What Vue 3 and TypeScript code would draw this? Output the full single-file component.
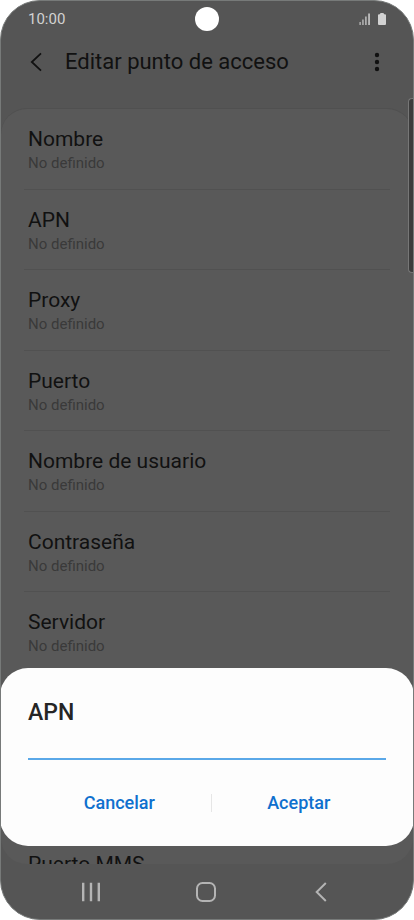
<script setup lang="ts">
import { ref } from 'vue'

interface Field {
  id: string
  label: string
  value: string
}

const fields = ref<Field[]>([
  { id: 'name', label: 'Nombre', value: '' },
  { id: 'apn', label: 'APN', value: '' },
  { id: 'proxy', label: 'Proxy', value: '' },
  { id: 'port', label: 'Puerto', value: '' },
  { id: 'user', label: 'Nombre de usuario', value: '' },
  { id: 'password', label: 'Contraseña', value: '' },
  { id: 'server', label: 'Servidor', value: '' },
  { id: 'mmsc', label: 'MMSC', value: '' },
  { id: 'mms-proxy', label: 'Proxy MMS', value: '' },
  { id: 'mms-port', label: 'Puerto MMS', value: '' },
])

const editing = ref<Field | null>(fields.value[1])
const draft = ref('')

function open(field: Field): void {
  editing.value = field
  draft.value = field.value
}

function close(): void {
  editing.value = null
}

function accept(): void {
  if (editing.value) editing.value.value = draft.value
  close()
}
</script>

<template>
  <div class="phone">
    <header class="status">
      <span class="clock">10:00</span>
      <span class="camera"></span>
      <span class="indicators">
        <svg width="12" height="12" viewBox="0 0 12 12" fill="#c4c4c4" aria-hidden="true">
          <rect x="0.5" y="9" width="1.2" height="3" />
          <rect x="3.3" y="6.5" width="1.3" height="5.5" />
          <rect x="6.2" y="3.5" width="1.4" height="8.5" />
          <rect x="9.2" y="0.5" width="1.7" height="11.5" />
        </svg>
        <svg width="8" height="12" viewBox="0 0 8 12" fill="#d2d2d2" aria-hidden="true">
          <path d="M2 1.2Q2 0 3 0H5Q6 0 6 1.2H7Q8 1.2 8 2.2V11Q8 12 7 12H1Q0 12 0 11V2.2Q0 1.2 1 1.2Z" />
        </svg>
      </span>
    </header>

    <div class="toolbar">
      <button class="icon-button" type="button" aria-label="Atrás">
        <svg width="14" height="20" viewBox="0 0 14 20" fill="none" stroke="#111" stroke-width="1.8" aria-hidden="true">
          <path d="M11 1.3L1.8 10L11 18.7" />
        </svg>
      </button>
      <h1 class="title">Editar punto de acceso</h1>
      <button class="icon-button" type="button" aria-label="Más opciones">
        <svg width="6" height="20" viewBox="0 0 6 20" fill="#111" aria-hidden="true">
          <circle cx="3" cy="3" r="2.2" />
          <circle cx="3" cy="10" r="2.2" />
          <circle cx="3" cy="17" r="2.2" />
        </svg>
      </button>
    </div>

    <main class="card">
      <ul class="fields">
        <li v-for="field in fields" :key="field.id" class="item">
          <button class="field" type="button" @click="open(field)">
            <span class="label">{{ field.label }}</span>
            <span class="value">{{ field.value || 'No definido' }}</span>
          </button>
        </li>
      </ul>
    </main>

    <nav class="navbar">
      <button class="nav-button" type="button" aria-label="Recientes">
        <svg width="20" height="20" viewBox="0 0 20 20" fill="none" stroke="#b4b4b4" stroke-width="2.4" aria-hidden="true">
          <path d="M2.2 0.8V19.2M10 0.8V19.2M17.8 0.8V19.2" />
        </svg>
      </button>
      <button class="nav-button" type="button" aria-label="Inicio">
        <svg width="20" height="20" viewBox="0 0 20 20" fill="none" stroke="#b4b4b4" stroke-width="2" aria-hidden="true">
          <rect x="1" y="1" width="18" height="18" rx="5.5" />
        </svg>
      </button>
      <button class="nav-button" type="button" aria-label="Volver">
        <svg width="12" height="20" viewBox="0 0 12 20" fill="none" stroke="#b4b4b4" stroke-width="2" aria-hidden="true">
          <path d="M10.8 1L1.7 10L10.8 19" />
        </svg>
      </button>
    </nav>

    <span class="edge-handle"></span>

    <form v-if="editing" class="dialog" role="dialog" aria-labelledby="dialog-title" @submit.prevent="accept">
      <label id="dialog-title" class="dialog-title" for="dialog-input">{{ editing.label }}</label>
      <input id="dialog-input" v-model="draft" class="dialog-input" type="text" autocomplete="off" />
      <div class="actions">
        <button class="action" type="button" @click="close">Cancelar</button>
        <span class="divider"></span>
        <button class="action" type="submit">Aceptar</button>
      </div>
    </form>
  </div>
</template>

<style>
body {
  background: #fff;
}
</style>

<style scoped>
.phone {
  position: relative;
  display: flex;
  flex-direction: column;
  box-sizing: border-box;
  height: 100vh;
  overflow: hidden;
  border: 1px solid #777a79;
  border-radius: 40px;
  background: #555;
  color: #111;
  font-family: Roboto, "Liberation Sans", sans-serif;
}

button {
  padding: 0;
  border: 0;
  background: none;
  color: inherit;
  font: inherit;
  cursor: pointer;
}

svg {
  display: block;
}

.status {
  display: grid;
  grid-template-columns: 1fr auto 1fr;
  align-items: center;
  height: 36px;
  padding: 0 27px;
}

.clock {
  color: #d2d2d2;
  font-size: 15px;
  line-height: 20px;
}

.camera {
  width: 24px;
  height: 24px;
  border-radius: 50%;
  background: #fff;
}

.indicators {
  display: flex;
  justify-content: flex-end;
  gap: 7px;
}

.toolbar {
  display: flex;
  align-items: center;
  height: 50px;
  padding: 0 24px;
}

.icon-button {
  display: flex;
  align-items: center;
  justify-content: center;
  width: 24px;
  height: 40px;
}

.title {
  flex: 1;
  margin: 0;
  padding-left: 16px;
  font-size: 22px;
  font-weight: 400;
  line-height: 30px;
}

.card {
  flex: 1;
  min-height: 0;
  margin-top: 21px;
  overflow: hidden;
  border-top: 1px solid #505050;
  border-radius: 26px;
  background: #595959;
}

.fields {
  display: grid;
  grid-template-rows: repeat(10, 1fr);
  min-height: 805px;
  margin: 0;
  padding: 0 23px;
  list-style: none;
}

.item {
  border-bottom: 1px solid #515151;
}

.field {
  display: flex;
  flex-direction: column;
  width: 100%;
  padding: 16px 4px 0;
  text-align: left;
}

.label {
  font-size: 21px;
  line-height: 28px;
}

.value {
  color: #3a3a3a;
  font-size: 15px;
  line-height: 20px;
}

.navbar {
  display: flex;
  align-items: center;
  justify-content: center;
  height: 55px;
  padding-right: 2px;
}

.nav-button {
  display: flex;
  align-items: center;
  justify-content: center;
  width: 28%;
  height: 100%;
}

.edge-handle {
  position: absolute;
  top: 97px;
  right: -1px;
  width: 5px;
  height: 173px;
  border: 1px solid #777;
  border-right: 0;
  border-radius: 4px 0 0 4px;
  background: #3c3c3c;
}

.dialog {
  position: absolute;
  right: -1px;
  bottom: 73px;
  left: -1px;
  display: flex;
  flex-direction: column;
  box-sizing: border-box;
  padding: 30px 28px 22px;
  border-radius: 28px;
  background: #fdfdfd;
}

.dialog-title {
  color: #252525;
  font-size: 23px;
  font-weight: 500;
  line-height: 30px;
}

.dialog-input {
  height: 30px;
  padding: 0;
  border: 0;
  border-bottom: 2px solid #5aa8e8;
  border-radius: 0;
  outline: 0;
  background: transparent;
  color: #252525;
  font: inherit;
  font-size: 18px;
}

.actions {
  display: flex;
  align-items: center;
  margin-top: 22px;
}

.action {
  flex: 1 1 auto;
  color: #0f70ce;
  font-size: 18px;
  font-weight: 500;
  line-height: 42px;
}

.divider {
  width: 1px;
  height: 18px;
  background: #e6e6e6;
}
</style>
